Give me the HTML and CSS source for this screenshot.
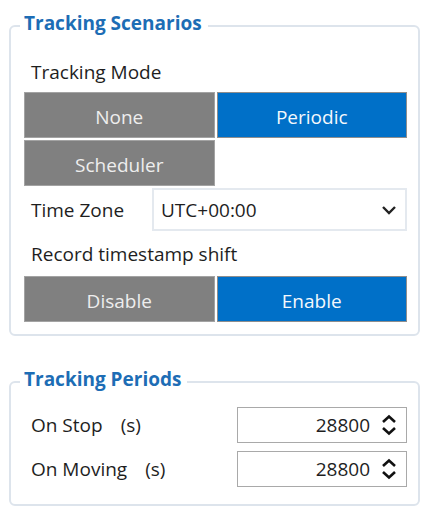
FILE: index.html
```html
<!DOCTYPE html>
<html lang="en">
<head>
<meta charset="utf-8">
<title>Tracking</title>
<link rel="stylesheet" href="styles.css">
</head>
<body>
<div class="panel">
  <section class="group scenarios">
    <div class="group-title">Tracking Scenarios</div>
    <div class="label">Tracking Mode</div>
    <div class="seg">
      <div class="btn off">None</div>
      <div class="btn on">Periodic</div>
      <div class="btn off">Scheduler</div>
    </div>
    <div class="row tz">
      <span class="row-label">Time Zone</span>
      <div class="select">
        <span>UTC+00:00</span>
        <svg class="chev" width="16" height="10" viewBox="0 0 16 10"><path d="M2 2 L8 8 L14 2" fill="none" stroke="#222" stroke-width="2.4"/></svg>
      </div>
    </div>
    <div class="label shift">Record timestamp shift</div>
    <div class="seg">
      <div class="btn off">Disable</div>
      <div class="btn on">Enable</div>
    </div>
  </section>

  <section class="group periods">
    <div class="group-title">Tracking Periods</div>
    <div class="row spin-row first">
      <span class="row-label">On Stop<span class="unit">(s)</span></span>
      <div class="spin">
        <span class="val">28800</span>
        <svg class="arrows" width="16" height="22" viewBox="0 0 16 22"><path d="M2 8 L8 2.5 L14 8" fill="none" stroke="#111" stroke-width="2.6"/><path d="M2 14 L8 19.5 L14 14" fill="none" stroke="#111" stroke-width="2.6"/></svg>
      </div>
    </div>
    <div class="row spin-row">
      <span class="row-label">On Moving<span class="unit">(s)</span></span>
      <div class="spin">
        <span class="val">28800</span>
        <svg class="arrows" width="16" height="22" viewBox="0 0 16 22"><path d="M2 8 L8 2.5 L14 8" fill="none" stroke="#111" stroke-width="2.6"/><path d="M2 14 L8 19.5 L14 14" fill="none" stroke="#111" stroke-width="2.6"/></svg>
      </div>
    </div>
  </section>
</div>
</body>
</html>
```

FILE: styles.css
```css
html, body {
  margin: 0;
  padding: 0;
  background: #ffffff;
}

body {
  font-family: "Open Sans", "Noto Sans", sans-serif;
  font-size: 19px;
  color: #1e1e1e;
}

.panel {
  padding: 25px 0 0 9px;
  width: 411px;
}

.group {
  border: 2px solid #dde4ec;
  border-radius: 6px;
}

.scenarios {
  padding: 0 11px 12px 13px;
}

.periods {
  margin-top: 45px;
  padding: 0 11px 17px 13px;
}

.group-title {
  width: max-content;
  margin: -17px 0 0 -4px;
  padding: 0 6px 0 4px;
  background: #ffffff;
  color: #1d6db5;
  font-weight: 700;
  line-height: 26px;
}

.label {
  line-height: 36px;
  margin-top: 18px;
  padding-left: 7px;
  margin-bottom: 2px;
}

.label.shift {
  margin-top: 2px;
  margin-bottom: 0;
  line-height: 43px;
}

.seg {
  display: grid;
  grid-template-columns: 1fr 1fr;
  gap: 2px;
}

.btn {
  height: 46px;
  box-sizing: border-box;
  display: flex;
  align-items: center;
  justify-content: center;
  padding-top: 3px;
  color: #eeeeee;
  border: 1px solid #a3a3a3;
}

.btn.off {
  background: #808080;
}

.btn.on {
  background: #0070c8;
  color: #f4f8fc;
  border-color: #8e8e8e;
}

.row {
  display: flex;
  align-items: center;
}

.row-label {
  padding-left: 7px;
}

.tz {
  margin-top: 2px;
}

.tz .row-label {
  width: 121px;
}

.select {
  flex: 1;
  height: 43px;
  box-sizing: border-box;
  border: 2px solid #e4e9ef;
  display: flex;
  align-items: center;
  justify-content: space-between;
  padding: 0 8px 0 7px;
}

.chev {
  display: block;
}

.spin-row {
  justify-content: space-between;
  margin-top: 8px;
}

.spin-row.first {
  margin-top: 15px;
}

.unit {
  margin-left: 18px;
}

.spin {
  width: 170px;
  height: 36px;
  box-sizing: border-box;
  border: 1px solid #a9a9a9;
  display: flex;
  align-items: center;
  justify-content: flex-end;
  padding-right: 9px;
}

.val {
  margin-right: 11px;
}

.arrows {
  display: block;
}
```
